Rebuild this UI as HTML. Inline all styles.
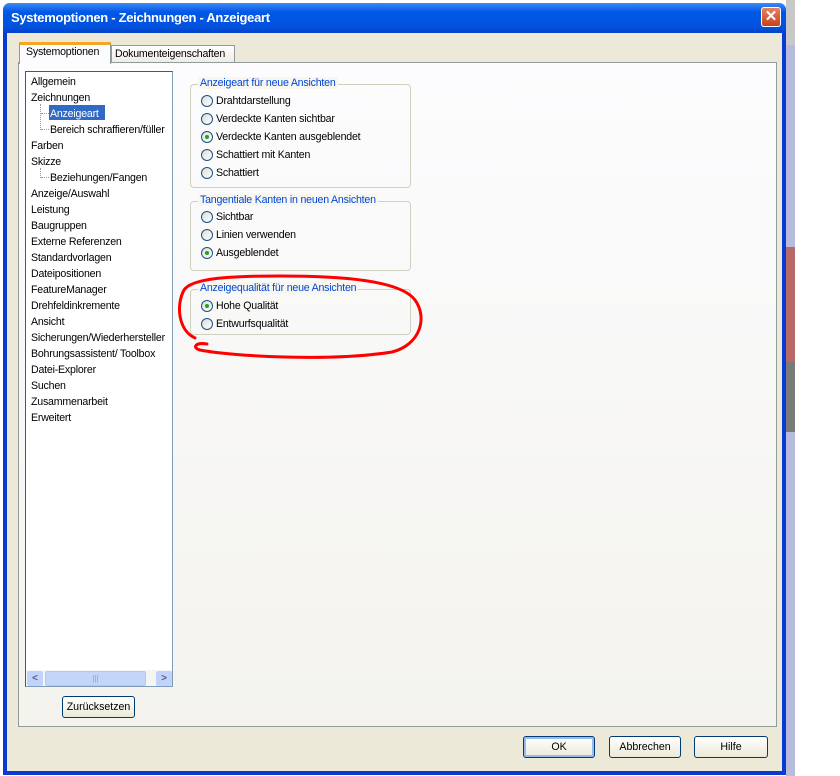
<!DOCTYPE html>
<html><head><meta charset="utf-8"><style>
*{margin:0;padding:0;box-sizing:border-box}
body{width:840px;height:776px;background:#fff;position:relative;overflow:hidden;font-family:"Liberation Sans",sans-serif;font-size:11px;color:#000}
.a{position:absolute}
.t{font-size:10.6px;white-space:nowrap;letter-spacing:-0.2px}
.btn{position:absolute;border:1px solid #003c74;border-radius:3px;background:linear-gradient(#fff,#ece9d8);text-align:center;font-size:10.6px;line-height:21px}
.grp{position:absolute;border:1px solid #d0d0bf;border-radius:4px}
.gl{position:absolute;top:-8px;left:7px;background:#f7f6f1;color:#0046d5;padding:0 2px;font-size:10.6px;white-space:nowrap;letter-spacing:-0.2px}
.r{position:absolute;width:12px;height:12px;border:1px solid #1c5180;border-radius:50%;background:linear-gradient(135deg,#dcdcd5,#fff)}
.r.on::after{content:"";position:absolute;left:3px;top:3px;width:4px;height:4px;border-radius:50%;background:#21a121}
</style></head><body>
<div class="a" style="left:786px;top:0;width:9px;height:776px;background:#b8bcdc"></div>
<div class="a" style="left:786px;top:0;width:9px;height:45px;background:#c8c8c8"></div>
<div class="a" style="left:786px;top:247px;width:9px;height:115px;background:#b96868"></div>
<div class="a" style="left:786px;top:362px;width:9px;height:70px;background:#7a7a7a"></div>
<div class="a" style="left:3px;top:3px;width:783px;height:772px;background:#0a3bd0;border-radius:7px 7px 0 0"></div>
<div class="a" style="left:3px;top:3px;width:783px;height:30px;background:linear-gradient(#3d8bf6,#0058e6 30%,#0252de 80%,#0343c8);border-radius:7px 7px 0 0"></div>
<div class="a t" style="left:11px;top:10px;color:#fff;font-weight:bold;font-size:13px;letter-spacing:-0.3px">Systemoptionen - Zeichnungen - Anzeigeart</div>
<div class="a" style="left:761px;top:7px;width:20px;height:20px;border:1px solid #fff;border-radius:3px;background:linear-gradient(#e88060,#c8401c);color:#fff;font-size:15px;font-weight:bold;text-align:center;line-height:18px">✕</div>
<div class="a" style="left:7px;top:33px;width:775px;height:738px;background:#ece9d8"></div>
<div class="a" style="left:111px;top:45px;width:124px;height:18px;border:1px solid #919b9c;border-bottom:none;background:linear-gradient(#fff,#ecebe5)"></div>
<div class="a t" style="left:115px;top:48px">Dokumenteigenschaften</div>
<div class="a" style="left:18px;top:62px;width:759px;height:665px;border:1px solid #919b9c;background:linear-gradient(#fcfcfe,#f4f3ee)"></div>
<div class="a" style="left:19px;top:42px;width:92px;height:22px;border:1px solid #919b9c;border-bottom:none;border-top:3px solid #f5a623;background:#fcfcfe"></div>
<div class="a t" style="left:26px;top:46px">Systemoptionen</div>
<div class="a" style="left:25px;top:71px;width:148px;height:616px;border:1px solid #7f9db9;border-top-color:#555;border-left-color:#555;background:#fff"></div>
<div class="a" style="left:40px;top:104px;width:1px;height:26px;border-left:1px dotted #999"></div>
<div class="a" style="left:41px;top:113px;width:8px;border-top:1px dotted #999"></div>
<div class="a" style="left:41px;top:129px;width:8px;border-top:1px dotted #999"></div>
<div class="a" style="left:40px;top:168px;width:1px;height:10px;border-left:1px dotted #999"></div>
<div class="a" style="left:41px;top:177px;width:8px;border-top:1px dotted #999"></div>
<div class="a" style="left:49px;top:105px;width:56px;height:15px;background:#316ac5"></div>
<div class="a t" style="left:31px;top:74px;line-height:16px">Allgemein<br>Zeichnungen<br><span style="padding-left:19px;color:#fff">Anzeigeart</span><br><span style="padding-left:19px">Bereich schraffieren/füller</span><br>Farben<br>Skizze<br><span style="padding-left:19px">Beziehungen/Fangen</span><br>Anzeige/Auswahl<br>Leistung<br>Baugruppen<br>Externe Referenzen<br>Standardvorlagen<br>Dateipositionen<br>FeatureManager<br>Drehfeldinkremente<br>Ansicht<br>Sicherungen/Wiederhersteller<br>Bohrungsassistent/ Toolbox<br>Datei-Explorer<br>Suchen<br>Zusammenarbeit<br>Erweitert</div>
<div class="a" style="left:26px;top:670px;width:146px;height:16px;background:#f5f5f1"></div>
<div class="a" style="left:27px;top:671px;width:16px;height:15px;background:#c1d3fb;border-radius:2px;color:#4d6185;font-size:10px;text-align:center;line-height:15px;font-weight:bold">&lt;</div>
<div class="a" style="left:45px;top:671px;width:101px;height:15px;background:#c4d5fb;border:1px solid #b4c8f6;border-radius:2px;color:#8aa;text-align:center;font-size:8px;line-height:13px">|||</div>
<div class="a" style="left:156px;top:671px;width:16px;height:15px;background:#c1d3fb;border-radius:2px;color:#4d6185;font-size:10px;text-align:center;line-height:15px;font-weight:bold">&gt;</div>
<div class="btn" style="left:62px;top:696px;width:73px;height:22px">Zurücksetzen</div>
<div class="grp" style="left:190px;top:84px;width:221px;height:104px"><div class="gl">Anzeigeart für neue Ansichten</div></div>
<div class="grp" style="left:190px;top:201px;width:221px;height:70px"><div class="gl">Tangentiale Kanten in neuen Ansichten</div></div>
<div class="grp" style="left:190px;top:289px;width:221px;height:46px"><div class="gl">Anzeigequalität für neue Ansichten</div></div>
<div class="r" style="left:201px;top:95px"></div><div class="a t" style="left:216px;top:95px">Drahtdarstellung</div>
<div class="r" style="left:201px;top:113px"></div><div class="a t" style="left:216px;top:113px">Verdeckte Kanten sichtbar</div>
<div class="r on" style="left:201px;top:131px"></div><div class="a t" style="left:216px;top:131px">Verdeckte Kanten ausgeblendet</div>
<div class="r" style="left:201px;top:149px"></div><div class="a t" style="left:216px;top:149px">Schattiert mit Kanten</div>
<div class="r" style="left:201px;top:167px"></div><div class="a t" style="left:216px;top:167px">Schattiert</div>
<div class="r" style="left:201px;top:211px"></div><div class="a t" style="left:216px;top:211px">Sichtbar</div>
<div class="r" style="left:201px;top:229px"></div><div class="a t" style="left:216px;top:229px">Linien verwenden</div>
<div class="r on" style="left:201px;top:247px"></div><div class="a t" style="left:216px;top:247px">Ausgeblendet</div>
<div class="r on" style="left:201px;top:300px"></div><div class="a t" style="left:216px;top:300px">Hohe Qualität</div>
<div class="r" style="left:201px;top:318px"></div><div class="a t" style="left:216px;top:318px">Entwurfsqualität</div>
<svg class="a" style="left:0;top:0" width="840" height="776"><path d="M207,344 C195,342 192,348 200,350 C230,356 330,362 392,352 C420,345 428,318 415,300 C400,280 340,276 280,276 C230,276 192,278 184,290 C176,305 178,330 195,338" fill="none" stroke="#f00" stroke-width="3" stroke-linecap="round"/></svg>
<div class="btn" style="left:523px;top:736px;width:72px;height:22px;border-color:#003c74;box-shadow:inset 0 0 0 2px #9ab9f0">OK</div>
<div class="btn" style="left:609px;top:736px;width:72px;height:22px">Abbrechen</div>
<div class="btn" style="left:694px;top:736px;width:74px;height:22px">Hilfe</div>
</body></html>
